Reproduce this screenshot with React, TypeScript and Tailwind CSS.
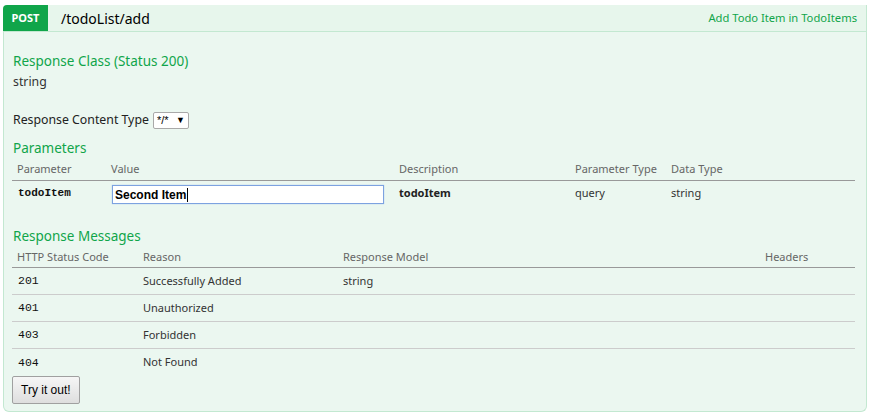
const params = [
  { name: "todoItem", value: "Second Item", desc: "todoItem", type: "query", dataType: "string" },
];

const messages = [
  ["201", "Successfully Added", "string"],
  ["401", "Unauthorized", ""],
  ["403", "Forbidden", ""],
  ["404", "Not Found", ""],
];

const font = "font-['Noto_Sans','Open_Sans',sans-serif]";
const mono = "font-['Liberation_Mono','DejaVu_Sans_Mono',monospace]";

export default function App() {
  return (
    <div className={`min-h-screen bg-white pl-[3px] pt-[5px] ${font}`}>
      <div className="w-[864px]">
        {/* heading */}
        <div className="flex h-[27px] items-stretch rounded-tl-sm border border-l-0 border-t-0 border-[#c3e8d1] bg-[#e7f6ec]">
          <span className="flex w-[45px] items-center justify-center rounded-tl-sm bg-[#10a54a] pt-[1px] text-[11px] font-bold text-white">
            POST
          </span>
          <span className="ml-[13px] flex items-center text-[14px] text-black">/todoList/add</span>
          <span className="ml-auto mr-[9px] flex items-center text-[11.2px] text-[#10a54a]">
            Add Todo Item in TodoItems
          </span>
        </div>

        {/* content */}
        <div className="rounded-b-md border border-t-0 border-[#c3e8d1] bg-[#ebf7f0] pb-[7px] pl-[8px] pr-[10px] pt-[19px] text-[#333]">
          <h4 className="pl-[1px] text-[13.5px] leading-[20px] text-[#10a54a]">Response Class (Status 200)</h4>
          <p className="mt-[1px] pl-[1px] text-[12.3px] leading-[20px]">string</p>

          <div className="mt-[18px] flex items-center pl-[1px] text-[12.3px] leading-[20px] text-[#222]">
            <span>Response Content Type</span>
            <span className="ml-[4px] flex h-[17px] w-[36px] items-center justify-between rounded-[2px] border border-[#a9a9a9] bg-white px-[3px] font-['Liberation_Sans',sans-serif] text-[11px] text-black">
              <span>*/*</span>
              <span className="text-[9px]">▼</span>
            </span>
          </div>

          <h4 className="mt-[8px] pl-[1px] text-[13.5px] leading-[20px] text-[#10a54a]">Parameters</h4>
          <table className="w-[843px] table-fixed border-collapse">
            <colgroup>
              <col className="w-[94px]" />
              <col className="w-[288px]" />
              <col className="w-[176px]" />
              <col className="w-[96px]" />
              <col />
            </colgroup>
            <thead>
              <tr className="border-b border-[#999]">
                {["Parameter", "Value", "Description", "Parameter Type", "Data Type"].map((h) => (
                  <th key={h} className="pl-[5px] text-left text-[11px] font-normal leading-[22px] text-[#666]">
                    {h}
                  </th>
                ))}
              </tr>
            </thead>
            <tbody>
              {params.map((p) => (
                <tr key={p.name}>
                  <td className={`pl-[6px] text-[11px] font-bold leading-[24px] text-[#111] ${mono}`}>{p.name}</td>
                  <td className="pl-[6px] pt-[4px] align-top">
                    <div className="flex h-[19px] w-[272px] items-center border border-[#7da2e0] bg-white pl-[2px] font-['Liberation_Sans',sans-serif] text-[12px] font-bold text-black shadow-[0_0_1px_#9cbcf0]">
                      {p.value}
                      <span className="ml-[1px] h-[14px] w-px bg-black" />
                    </div>
                  </td>
                  <td className="pl-[5px] text-[11px] font-bold leading-[24px] text-[#222]">{p.desc}</td>
                  <td className="pl-[5px] text-[11px] leading-[24px]">{p.type}</td>
                  <td className="pl-[5px] text-[11px] leading-[24px]">{p.dataType}</td>
                </tr>
              ))}
            </tbody>
          </table>

          <h4 className="mt-[21px] pl-[1px] text-[13.5px] leading-[20px] text-[#10a54a]">Response Messages</h4>
          <table className="w-[843px] table-fixed border-collapse">
            <colgroup>
              <col className="w-[126px]" />
              <col className="w-[200px]" />
              <col className="w-[422px]" />
              <col />
            </colgroup>
            <thead>
              <tr className="border-b border-[#999]">
                {["HTTP Status Code", "Reason", "Response Model", "Headers"].map((h) => (
                  <th key={h} className="pl-[5px] text-left text-[11px] font-normal leading-[21px] text-[#666]">
                    {h}
                  </th>
                ))}
              </tr>
            </thead>
            <tbody>
              {messages.map((m, i) => (
                <tr key={m[0]} className={i < messages.length - 1 ? "border-b border-[#ccc]" : ""}>
                  <td className={`h-[27px] pl-[6px] text-[11.5px] text-[#111] ${mono}`}>{m[0]}</td>
                  <td className="pl-[5px] text-[11px]">{m[1]}</td>
                  <td className="pl-[5px] text-[11px]">{m[2]}</td>
                  <td />
                </tr>
              ))}
            </tbody>
          </table>

          <button className="mt-[-1px] h-[28px] rounded-[2px] border border-[#a0a0a0] bg-gradient-to-b from-[#f6f6f6] to-[#dedede] px-[8px] font-['Liberation_Sans',sans-serif] text-[12px] text-black">
            Try it out!
          </button>
        </div>
      </div>
    </div>
  );
}
